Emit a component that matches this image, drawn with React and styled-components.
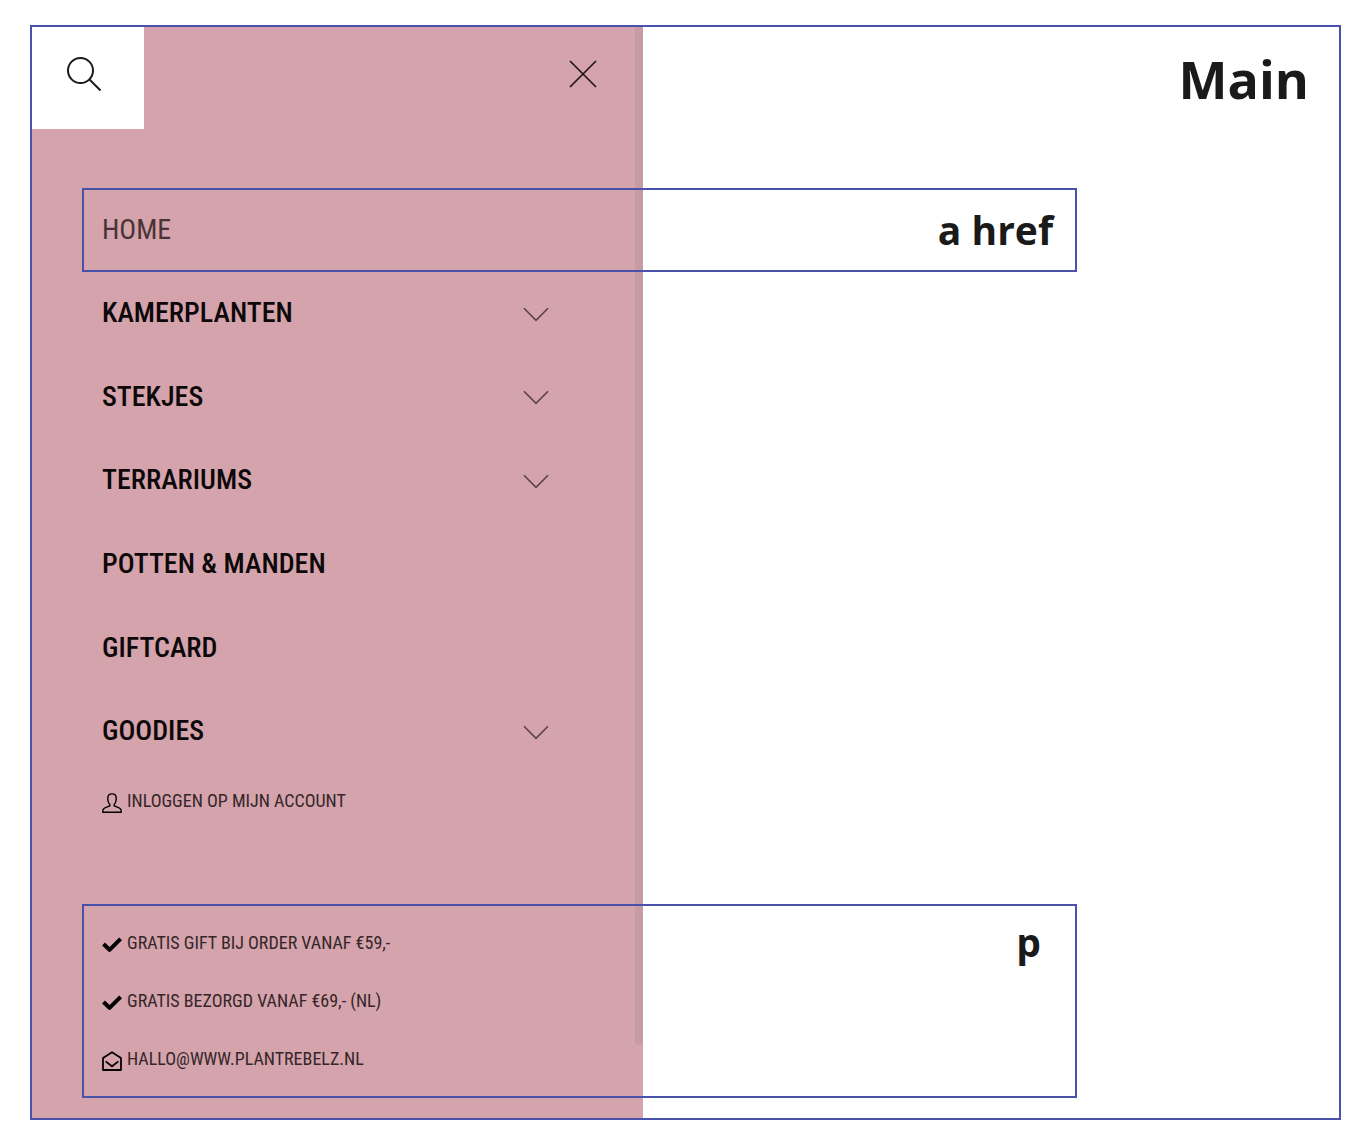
import React from "react";
import styled, { createGlobalStyle } from "styled-components";

const ink = "#0d0809";
const outline = "#4a51ab";
const narrow = `"Roboto Condensed", "Liberation Sans Narrow", "Liberation Sans", sans-serif`;

const GlobalStyle = createGlobalStyle`
  *, *::before, *::after { box-sizing: border-box; }
  body { margin: 0; background: #fff; color: ${ink}; font-family: ${narrow}; }
  a { color: inherit; text-decoration: none; }
  p { margin: 0; }
  svg { display: block; flex: none; }
`;

const Frame = styled.main`
  display: grid;
  grid-template-columns: 611fr 696fr;
  margin: 25px 25px 23px 30px;
  border: 2px solid ${outline};
`;

const DrawerSurface = styled.div`
  grid-area: 1 / 1 / 2 / 2;
  display: flex;
  justify-content: flex-end;
  background: #d4a3ab;
`;

const ScrollThumb = styled.div`
  width: 8px;
  height: 93.3%;
  border-radius: 0 0 4px 4px;
  background: #c69ba1;
`;

const Content = styled.div`
  grid-area: 1 / 1 / 2 / 3;
  padding-bottom: 20px;
`;

const Header = styled.header`
  display: grid;
  grid-template-columns: 611fr 696fr;
  grid-template-rows: 102px;
`;

const DrawerBar = styled.div`
  display: flex;
  align-items: stretch;
  justify-content: space-between;
  padding-right: 46px;
`;

const IconButton = styled.button`
  display: flex;
  align-items: center;
  justify-content: center;
  padding: 0;
  border: 0;
  background: transparent;
  color: ${ink};
  cursor: pointer;
`;

const SearchButton = styled(IconButton)`
  width: 112px;
  padding: 0 8px 8px 0;
  background: #fff;
`;

const CloseButton = styled(IconButton)`
  padding-bottom: 8px;
`;

const ExpandButton = styled(IconButton)`
  padding-top: 2px;
`;

const Tag = styled.span`
  font-family: "Open Sans", "Noto Sans", sans-serif;
  font-weight: 700;
  font-size: ${(p) => (p.$large ? 52 : 39)}px;
  line-height: ${(p) => (p.$large ? 104 : 56)}px;
  color: #1a1a1a;
`;

const MainTag = styled(Tag)`
  justify-self: end;
  padding-right: 30px;
`;

const Body = styled.div`
  width: 80%;
  max-width: 1045px;
  padding: 59px 0 0 50px;
`;

const Menu = styled.ul`
  display: grid;
  grid-auto-rows: 1fr;
  height: 585px;
  margin: 0;
  padding: 0;
  list-style: none;
`;

const MenuRow = styled.li`
  display: flex;
  align-items: center;
  justify-content: space-between;
  padding: 0 22px 0 18px;
  border: 2px solid ${(p) => (p.$outlined ? outline : "transparent")};
`;

const Entry = styled.div`
  display: flex;
  align-items: center;
  justify-content: space-between;
  width: 47%;
`;

const MenuLink = styled.a`
  font-size: 28px;
  font-weight: ${(p) => (p.$current ? 400 : 500)};
  line-height: 40px;
  white-space: nowrap;
  color: ${(p) => (p.$current ? "#4a3336" : ink)};
`;

const Line = styled.p`
  display: flex;
  align-items: center;
  gap: 5px;
  height: ${(p) => (p.$account ? 56 : 58)}px;
  padding-left: ${(p) => (p.$account ? 20 : 0)}px;
  font-size: 18px;
  line-height: 24px;
  white-space: nowrap;
  color: #35262a;

  svg { color: #000; margin-top: 4px; }
`;

const Perks = styled.section`
  display: flex;
  justify-content: space-between;
  margin-top: 75px;
  padding: 8px 34px 8px 18px;
  border: 2px solid ${outline};
`;

const SearchIcon = () => (
  <svg width="36" height="36" viewBox="0 0 36 36" fill="none" stroke="#1b1b1b" strokeWidth="2">
    <circle cx="14.5" cy="14.5" r="12.5" />
    <path d="M23.5 23.5 34.5 34.5" />
  </svg>
);

const CloseIcon = () => (
  <svg width="28" height="28" viewBox="0 0 28 28" fill="none" stroke="#241519" strokeWidth="1.7">
    <path d="M1 1 27 27M27 1 1 27" />
  </svg>
);

const ChevronIcon = () => (
  <svg width="26" height="15" viewBox="0 0 26 15" fill="none" stroke="#5c4247" strokeWidth="1.6">
    <path d="M1 1.2 13 13.4 25 1.2" />
  </svg>
);

const UserIcon = () => (
  <svg width="20" height="20" viewBox="0 0 20 20" fill="none" stroke="currentColor" strokeWidth="1.4" strokeLinejoin="round">
    <path d="M7.8 11.6C6.3 10 5.7 8 5.7 5.6 5.7 2.6 7.4.9 10 .9s4.3 1.7 4.3 4.7c0 2.4-.6 4.4-2.1 6v1.3l4.900 1.900c1.500.6 2.100 1.600 2.100 3.200v1.200H.8V18c0-1.600.6-2.600 2.100-3.200l4.900-1.900z" />
  </svg>
);

const CheckIcon = () => (
  <svg width="20" height="20" viewBox="0 0 20 20" fill="none" stroke="currentColor" strokeWidth="4" strokeLinejoin="round">
    <path d="M1.500 9 7.500 14.800 18.600 3.800" />
  </svg>
);

const MailIcon = () => (
  <svg width="20" height="20" viewBox="0 0 20 20" fill="none" stroke="currentColor" strokeWidth="1.800">
    <path d="M1 7 10 1.200 19 7v12H1z" strokeLinejoin="round" />
    <path d="M3.600 10.400 10 15.300l6.400-4.900" />
  </svg>
);

const menu = [
  { label: "HOME", current: true },
  { label: "KAMERPLANTEN", expandable: true },
  { label: "STEKJES", expandable: true },
  { label: "TERRARIUMS", expandable: true },
  { label: "POTTEN & MANDEN" },
  { label: "GIFTCARD" },
  { label: "GOODIES", expandable: true },
];

export default function App() {
  return (
    <>
      <GlobalStyle />
      <Frame>
        <DrawerSurface>
          <ScrollThumb />
        </DrawerSurface>
        <Content>
          <Header>
            <DrawerBar>
              <SearchButton type="button" aria-label="Zoeken"><SearchIcon /></SearchButton>
              <CloseButton type="button" aria-label="Sluiten"><CloseIcon /></CloseButton>
            </DrawerBar>
            <MainTag $large>Main</MainTag>
          </Header>
          <Body>
            <nav>
              <Menu>
                {menu.map((item) => (
                  <MenuRow key={item.label} $outlined={item.current}>
                    <Entry>
                      <MenuLink href="#" $current={item.current}>{item.label}</MenuLink>
                      {item.expandable && (
                        <ExpandButton type="button" aria-label={item.label}><ChevronIcon /></ExpandButton>
                      )}
                    </Entry>
                    {item.current && <Tag>a href</Tag>}
                  </MenuRow>
                ))}
              </Menu>
            </nav>
            <Line $account>
              <UserIcon />
              <a href="#">INLOGGEN OP MIJN ACCOUNT</a>
            </Line>
            <Perks>
              <div>
                <Line><CheckIcon />GRATIS GIFT BIJ ORDER VANAF €59,-</Line>
                <Line><CheckIcon />GRATIS BEZORGD VANAF €69,- (NL)</Line>
                <Line><MailIcon /><a href="mailto:hallo@www.plantrebelz.nl">HALLO@WWW.PLANTREBELZ.NL</a></Line>
              </div>
              <Tag>p</Tag>
            </Perks>
          </Body>
        </Content>
      </Frame>
    </>
  );
}
